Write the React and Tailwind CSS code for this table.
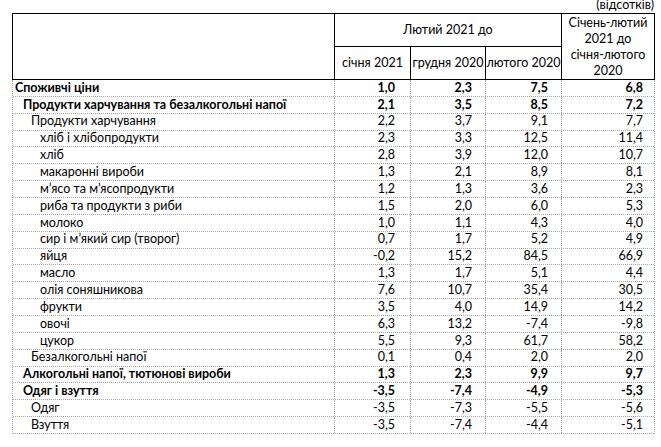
import React from "react";

const rows = [
  { name: "Споживчі ціни", lvl: 0, b: true, v: ["1,0", "2,3", "7,5", "6,8"] },
  { name: "Продукти харчування та безалкогольні напої", lvl: 1, b: true, v: ["2,1", "3,5", "8,5", "7,2"] },
  { name: "Продукти харчування", lvl: 2, v: ["2,2", "3,7", "9,1", "7,7"] },
  { name: "хліб і хлібопродукти", lvl: 3, v: ["2,3", "3,3", "12,5", "11,4"] },
  { name: "хліб", lvl: 3, v: ["2,8", "3,9", "12,0", "10,7"] },
  { name: "макаронні вироби", lvl: 3, v: ["1,3", "2,1", "8,9", "8,1"] },
  { name: "м’ясо та м’ясопродукти", lvl: 3, v: ["1,2", "1,3", "3,6", "2,3"] },
  { name: "риба та продукти з риби", lvl: 3, v: ["1,5", "2,0", "6,0", "5,3"] },
  { name: "молоко", lvl: 3, v: ["1,0", "1,1", "4,3", "4,0"] },
  { name: "сир і м’який сир (творог)", lvl: 3, v: ["0,7", "1,7", "5,2", "4,9"] },
  { name: "яйця", lvl: 3, v: ["-0,2", "15,2", "84,5", "66,9"] },
  { name: "масло", lvl: 3, v: ["1,3", "1,7", "5,1", "4,4"] },
  { name: "олія соняшникова", lvl: 3, v: ["7,6", "10,7", "35,4", "30,5"] },
  { name: "фрукти", lvl: 3, v: ["3,5", "4,0", "14,9", "14,2"] },
  { name: "овочі", lvl: 3, v: ["6,3", "13,2", "-7,4", "-9,8"] },
  { name: "цукор", lvl: 3, v: ["5,5", "9,3", "61,7", "58,2"] },
  { name: "Безалкогольні напої", lvl: 2, v: ["0,1", "0,4", "2,0", "2,0"] },
  { name: "Алкогольні напої, тютюнові вироби", lvl: 1, b: true, v: ["1,3", "2,3", "9,9", "9,7"] },
  { name: "Одяг і взуття", lvl: 1, b: true, v: ["-3,5", "-7,4", "-4,9", "-5,3"] },
  { name: "Одяг", lvl: 2, v: ["-3,5", "-7,3", "-5,5", "-5,6"] },
  { name: "Взуття", lvl: 2, v: ["-3,5", "-7,4", "-4,4", "-5,1"] },
];

const indent = ["pl-[2px]", "pl-[10px]", "pl-[18px]", "pl-[27px]"];

function Row({ r }) {
  return (
    <div className={`flex h-[16.86px] items-center border-b border-dotted border-[#a6a6a6] ${r.b ? "font-bold" : ""}`}>
      <div className={`h-full w-[322px] flex items-center border-r border-dotted border-[#a6a6a6] ${indent[r.lvl]}`}>
        {r.name}
      </div>
      <div className="h-full w-[76px] flex items-center justify-end pr-[15px] border-r border-dotted border-[#a6a6a6]">{r.v[0]}</div>
      <div className="h-full w-[75px] flex items-center justify-end pr-[13px] border-r border-dotted border-[#a6a6a6]">{r.v[1]}</div>
      <div className="h-full w-[76px] flex items-center justify-end pr-[13px] border-r border-dotted border-[#a6a6a6]">{r.v[2]}</div>
      <div className="h-full w-[92px] flex items-center justify-end pr-[11px]">{r.v[3]}</div>
    </div>
  );
}

export default function App() {
  return (
    <div className="w-[661px] h-[447px] bg-white overflow-hidden text-[12.5px] text-black font-['Lato',sans-serif] leading-none">
      <div className="h-[13px] w-[655px] flex justify-end items-start">
        <span className="-mt-[2px] leading-[14px] pr-[1px]">(відсотків)</span>
      </div>
      <div className="ml-[12px] w-[643px] h-[67px] flex border border-black">
        <div className="w-[322px] border-r border-black" />
        <div className="w-[227px] flex flex-col border-r border-black">
          <div className="h-[33px] flex items-center justify-center border-b border-black">Лютий 2021 до</div>
          <div className="flex flex-1">
            <div className="w-[76px] flex items-center justify-center border-r border-black">січня 2021</div>
            <div className="w-[75px] flex items-center justify-center border-r border-black">грудня 2020</div>
            <div className="flex-1 flex items-center justify-center">лютого 2020</div>
          </div>
        </div>
        <div className="flex-1 flex items-center justify-center text-center leading-[16px]">
          Січень-лютий<br />2021 до<br />січня-лютого<br />2020
        </div>
      </div>
      <div className="ml-[12px] w-[643px] border-l border-r border-dotted border-[#a6a6a6]">
        {rows.map((r, i) => (
          <Row key={i} r={r} />
        ))}
      </div>
    </div>
  );
}
